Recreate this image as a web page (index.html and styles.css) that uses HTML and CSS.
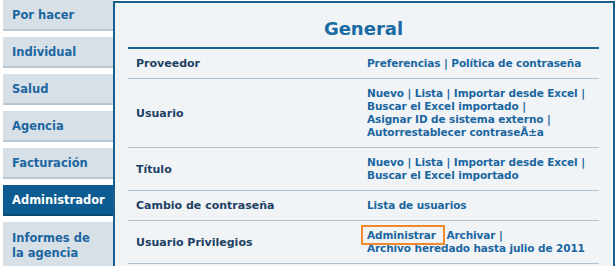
FILE: index.html
```html
<!DOCTYPE html>
<html lang="es">
<head>
<meta charset="utf-8">
<title>General</title>
<link rel="stylesheet" href="styles.css">
</head>
<body>
<div class="page">
  <nav class="sidebar">
    <a class="tab" href="#">Por hacer</a>
    <a class="tab" href="#">Individual</a>
    <a class="tab" href="#">Salud</a>
    <a class="tab" href="#">Agencia</a>
    <a class="tab" href="#">Facturación</a>
    <a class="tab active" href="#">Administrador</a>
    <a class="tab tall" href="#">Informes de<br>la agencia</a>
  </nav>
  <main class="panel">
    <h1 class="title">General</h1>
    <table class="grid">
      <tr>
        <th>Proveedor</th>
        <td><a href="#">Preferencias</a> | <a href="#">Política de contraseña</a></td>
      </tr>
      <tr>
        <th>Usuario</th>
        <td><a href="#">Nuevo</a> | <a href="#">Lista</a> | <a href="#">Importar desde Excel</a> |<br><a href="#">Buscar el Excel importado</a> |<br><a href="#">Asignar ID de sistema externo</a> |<br><a href="#">Autorrestablecer contraseÃ±a</a></td>
      </tr>
      <tr>
        <th>Título</th>
        <td><a href="#">Nuevo</a> | <a href="#">Lista</a> | <a href="#">Importar desde Excel</a> |<br><a href="#">Buscar el Excel importado</a></td>
      </tr>
      <tr>
        <th>Cambio de contraseña</th>
        <td><a href="#">Lista de usuarios</a></td>
      </tr>
      <tr>
        <th>Usuario Privilegios</th>
        <td><a class="highlight" href="#">Administrar</a> <a href="#">Archivar</a> |<br><a href="#">Archivo heredado hasta julio de 2011</a></td>
      </tr>
    </table>
  </main>
</div>
</body>
</html>
```
FILE: styles.css
```css
html, body {
  margin: 0;
  padding: 0;
  background: #ffffff;
  height: 266px;
  overflow: hidden;
}

body {
  font-family: "DejaVu Sans", Verdana, sans-serif;
  font-size: 11px;
  font-weight: bold;
}

.page {
  display: flex;
  align-items: flex-start;
  height: 266px;
}

.sidebar {
  display: flex;
  flex-direction: column;
  gap: 6px;
  padding-left: 3px;
  width: 110px;
  flex: none;
}

.tab {
  display: flex;
  align-items: center;
  box-sizing: border-box;
  height: 31px;
  padding: 2px 0 0 9px;
  background: #d8e0e7;
  border-bottom: 2px solid #b9c7d3;
  color: #1b66a0;
  text-decoration: none;
  font-size: 11.5px;
  line-height: 15px;
}

.tab.active {
  background: #0d5c91;
  border-bottom-color: #0a4a75;
  color: #ffffff;
}

.tab.tall {
  height: 50px;
  align-items: flex-start;
  padding-top: 9px;
  border-bottom: none;
}

.panel {
  box-sizing: border-box;
  margin-top: 1px;
  width: 502px;
  height: 280px;
  flex: none;
  background: #f1f4f6;
  border: 2px solid #1a5e8f;
  padding: 0 14px 0 13px;
}

.title {
  margin: 0;
  height: 46px;
  box-sizing: border-box;
  padding-top: 15px;
  text-align: center;
  font-size: 18px;
  line-height: 22px;
  color: #1a6aa3;
  border-bottom: 2px solid #1a6496;
}

.grid {
  width: 100%;
  border-collapse: collapse;
}

.grid th,
.grid td {
  padding: 8px 0 8px 8px;
  line-height: 13px;
  border-bottom: 1px solid #afc3d3;
  text-align: left;
}

.grid th {
  width: 223px;
  vertical-align: middle;
  color: #1d3f63;
  font-size: 11px;
}

.grid td {
  vertical-align: top;
  color: #1b66a0;
  font-size: 10.5px;
  letter-spacing: -0.1px;
  white-space: nowrap;
}

.grid a {
  color: #1b66a0;
  text-decoration: none;
}

.highlight {
  position: relative;
  margin-right: 7px;
}

.highlight::after {
  content: "";
  position: absolute;
  left: -6px;
  right: -9px;
  top: -4px;
  bottom: -4px;
  border: 2px solid #f08a2a;
}
```
